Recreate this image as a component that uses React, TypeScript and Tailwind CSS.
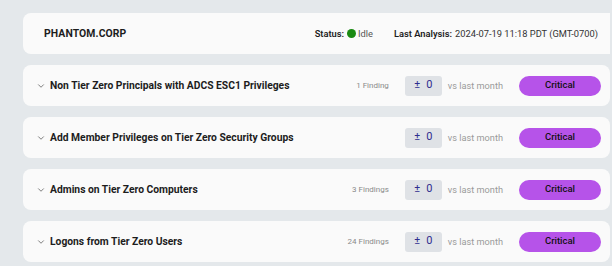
import { ChevronDown } from "lucide-react";

const rows = [
  { title: "Non Tier Zero Principals with ADCS ESC1 Privileges", findings: "1 Finding" },
  { title: "Add Member Privileges on Tier Zero Security Groups", findings: "" },
  { title: "Admins on Tier Zero Computers", findings: "3 Findings" },
  { title: "Logons from Tier Zero Users", findings: "24 Findings" },
];

export default function App() {
  return (
    <div className="h-[266px] w-[612px] overflow-hidden bg-[#e4e8eb] pt-[13px] pl-[23px] pr-[2px] font-['Roboto',sans-serif] text-[#1d1d1d]">
      <div className="flex flex-col gap-[11px]">
        {/* Domain header */}
        <div className="flex h-[41px] items-center rounded-l-lg bg-[#fafafa] pl-[21px] pr-[12px]">
          <span className="text-[10.4px] font-bold tracking-[0.1px]">PHANTOM.CORP</span>
          <div className="ml-auto flex items-center text-[9.3px]">
            <span className="font-semibold">Status:</span>
            <span className="ml-[3px] inline-block h-[9px] w-[9px] rounded-full bg-[#1a8a12]" />
            <span className="ml-[2px] text-[#555]">Idle</span>
            <span className="ml-[21px] font-semibold">Last Analysis:</span>
            <span className="ml-[3px] text-[#333]">2024-07-19 11:18 PDT (GMT-0700)</span>
          </div>
        </div>

        {rows.map((row) => (
          <div key={row.title} className="flex h-[41px] items-center rounded-lg bg-[#fafafa] pl-[13px] pr-[9px]">
            <ChevronDown size={10} strokeWidth={1.5} className="text-[#333]" />
            <span className="ml-[4px] text-[10.3px] font-bold">{row.title}</span>
            <div className="ml-auto flex items-center">
              <span className="text-[8px] text-[#8a8a8a]">{row.findings}</span>
              <div className="ml-[16px] flex h-[20px] w-[37px] items-center justify-center gap-[6px] rounded-[3px] bg-[#dfe2e6] text-[11px] text-[#2f2d8f]">
                <span>±</span>
                <span>0</span>
              </div>
              <span className="ml-[6px] text-[9.2px] text-[#9a9a9a]">vs last month</span>
              <div className="ml-[16px] flex h-[20px] w-[82px] items-center justify-center rounded-full bg-[#b653e9] text-[9.5px] font-medium text-[#111]">
                Critical
              </div>
            </div>
          </div>
        ))}
      </div>
    </div>
  );
}
